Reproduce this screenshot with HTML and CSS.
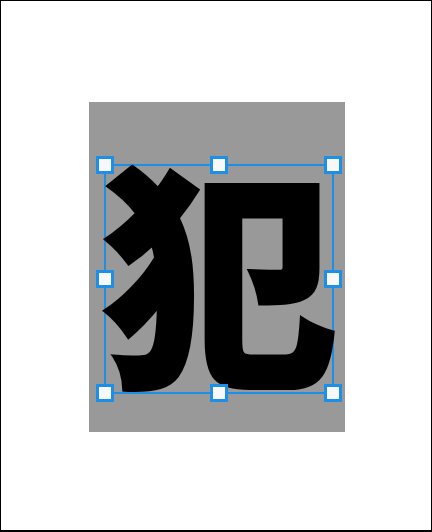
FILE: index.html
```html
<!DOCTYPE html>
<html lang="en">
<head>
    <meta charset="UTF-8">
    <title>Glyph editor</title>
    <link rel="stylesheet" href="styles.css">
</head>
<body>
    <div class="frame">
        <div class="artboard">
            <div class="glyph-box">
                <span class="glyph">犯</span>
                <span class="handle nw"></span>
                <span class="handle n"></span>
                <span class="handle ne"></span>
                <span class="handle w"></span>
                <span class="handle e"></span>
                <span class="handle sw"></span>
                <span class="handle s"></span>
                <span class="handle se"></span>
            </div>
        </div>
    </div>
</body>
</html>
```

FILE: styles.css
```css
html, body {
    margin: 0;
    padding: 0;
    background: #fff;
}
.frame {
    box-sizing: border-box;
    width: 432px;
    height: 532px;
    border: 1px solid #000;
    border-bottom-width: 2px;
    padding-top: 101px;
    display: flex;
    justify-content: center;
    align-items: flex-start;
}
.artboard {
    position: relative;
    width: 256px;
    height: 330px;
    margin-left: 2px;
    background: #999;
}
.glyph-box {
    position: absolute;
    left: 15px;
    top: 62px;
    width: 230px;
    height: 230px;
    box-sizing: border-box;
    border: 2px solid #1e8fe6;
}
.glyph {
    position: absolute;
    left: -4px;
    top: -30px;
    width: 234px;
    height: 260px;
    font-family: "Noto Sans CJK SC", "Noto Sans CJK JP", sans-serif;
    font-weight: 900;
    font-size: 234px;
    line-height: 260px;
    text-align: center;
    color: #000;
    -webkit-text-stroke: 3px #000;
}
.handle {
    position: absolute;
    box-sizing: border-box;
    width: 18px;
    height: 18px;
    background: #f8f8f8;
    border: 3px solid #1e8fe6;
}
.nw { left: -10px; top: -10px; }
.n { left: 104px; top: -10px; }
.ne { right: -10px; top: -10px; }
.w { left: -10px; top: 104px; }
.e { right: -10px; top: 104px; }
.sw { left: -10px; bottom: -10px; }
.s { left: 104px; bottom: -10px; }
.se { right: -10px; bottom: -10px; }
```
